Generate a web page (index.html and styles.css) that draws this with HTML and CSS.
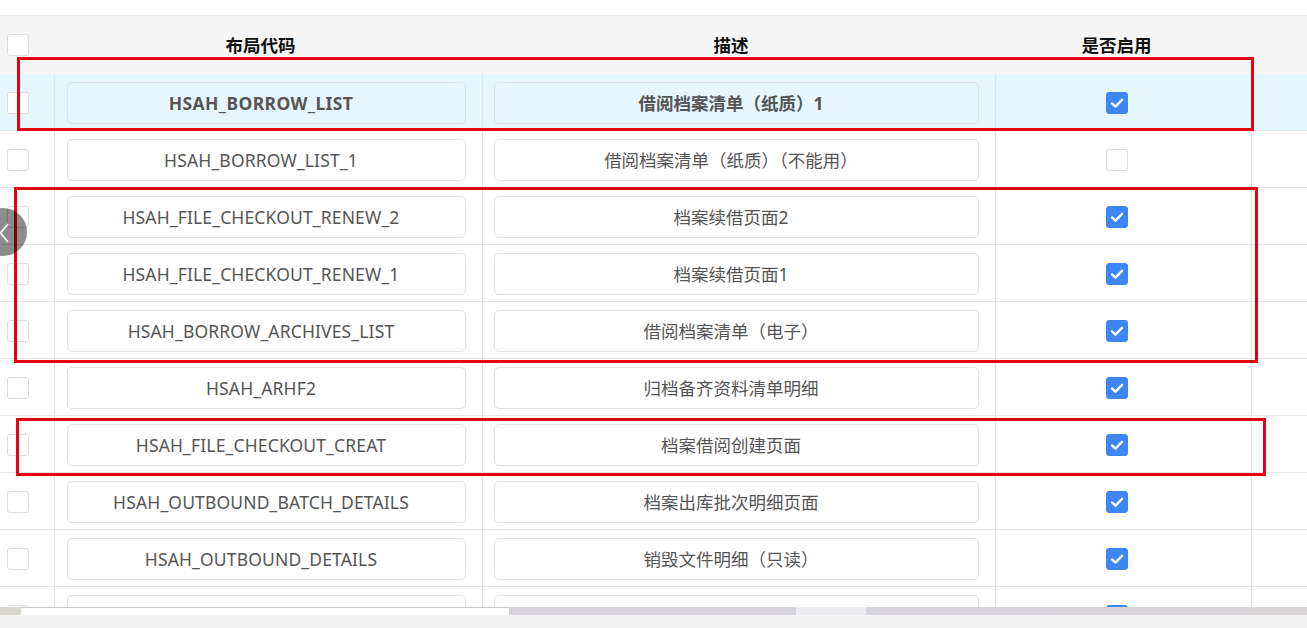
FILE: index.html
```html
<!DOCTYPE html>
<html lang="zh-CN">
<head>
<meta charset="utf-8">
<title>布局列表</title>
<link rel="stylesheet" href="styles.css">
</head>
<body>
<div class="page">
  <div class="topgap"></div>
  <div class="table">
    <div class="grid thead">
      <div class="cell c1"><span class="cb"></span></div>
      <div class="cell c2 th">布局代码</div>
      <div class="cell c3 th">描述</div>
      <div class="cell c4 th">是否启用</div>
      <div class="cell c5"></div>
    </div>

    <div class="grid tr active">
      <div class="cell c1"><span class="cb"></span></div>
      <div class="cell c2"><div class="field code">HSAH_BORROW_LIST</div></div>
      <div class="cell c3"><div class="field">借阅档案清单（纸质）1</div></div>
      <div class="cell c4"><span class="cb on"><svg viewBox="0 0 22 22"><path d="M5.5 11.5 L9.3 15 L16.5 7.5"/></svg></span></div>
      <div class="cell c5"></div>
    </div>

    <div class="grid tr">
      <div class="cell c1"><span class="cb"></span></div>
      <div class="cell c2"><div class="field code">HSAH_BORROW_LIST_1</div></div>
      <div class="cell c3"><div class="field">借阅档案清单（纸质）（不能用）</div></div>
      <div class="cell c4"><span class="cb"></span></div>
      <div class="cell c5"></div>
    </div>

    <div class="grid tr">
      <div class="cell c1"><span class="cb"></span></div>
      <div class="cell c2"><div class="field code">HSAH_FILE_CHECKOUT_RENEW_2</div></div>
      <div class="cell c3"><div class="field">档案续借页面2</div></div>
      <div class="cell c4"><span class="cb on"><svg viewBox="0 0 22 22"><path d="M5.5 11.5 L9.3 15 L16.5 7.5"/></svg></span></div>
      <div class="cell c5"></div>
    </div>

    <div class="grid tr">
      <div class="cell c1"><span class="cb"></span></div>
      <div class="cell c2"><div class="field code">HSAH_FILE_CHECKOUT_RENEW_1</div></div>
      <div class="cell c3"><div class="field">档案续借页面1</div></div>
      <div class="cell c4"><span class="cb on"><svg viewBox="0 0 22 22"><path d="M5.5 11.5 L9.3 15 L16.5 7.5"/></svg></span></div>
      <div class="cell c5"></div>
    </div>

    <div class="grid tr">
      <div class="cell c1"><span class="cb"></span></div>
      <div class="cell c2"><div class="field code">HSAH_BORROW_ARCHIVES_LIST</div></div>
      <div class="cell c3"><div class="field">借阅档案清单（电子）</div></div>
      <div class="cell c4"><span class="cb on"><svg viewBox="0 0 22 22"><path d="M5.5 11.5 L9.3 15 L16.5 7.5"/></svg></span></div>
      <div class="cell c5"></div>
    </div>

    <div class="grid tr">
      <div class="cell c1"><span class="cb"></span></div>
      <div class="cell c2"><div class="field code">HSAH_ARHF2</div></div>
      <div class="cell c3"><div class="field">归档备齐资料清单明细</div></div>
      <div class="cell c4"><span class="cb on"><svg viewBox="0 0 22 22"><path d="M5.5 11.5 L9.3 15 L16.5 7.5"/></svg></span></div>
      <div class="cell c5"></div>
    </div>

    <div class="grid tr">
      <div class="cell c1"><span class="cb"></span></div>
      <div class="cell c2"><div class="field code">HSAH_FILE_CHECKOUT_CREAT</div></div>
      <div class="cell c3"><div class="field">档案借阅创建页面</div></div>
      <div class="cell c4"><span class="cb on"><svg viewBox="0 0 22 22"><path d="M5.5 11.5 L9.3 15 L16.5 7.5"/></svg></span></div>
      <div class="cell c5"></div>
    </div>

    <div class="grid tr">
      <div class="cell c1"><span class="cb"></span></div>
      <div class="cell c2"><div class="field code">HSAH_OUTBOUND_BATCH_DETAILS</div></div>
      <div class="cell c3"><div class="field">档案出库批次明细页面</div></div>
      <div class="cell c4"><span class="cb on"><svg viewBox="0 0 22 22"><path d="M5.5 11.5 L9.3 15 L16.5 7.5"/></svg></span></div>
      <div class="cell c5"></div>
    </div>

    <div class="grid tr">
      <div class="cell c1"><span class="cb"></span></div>
      <div class="cell c2"><div class="field code">HSAH_OUTBOUND_DETAILS</div></div>
      <div class="cell c3"><div class="field">销毁文件明细（只读）</div></div>
      <div class="cell c4"><span class="cb on"><svg viewBox="0 0 22 22"><path d="M5.5 11.5 L9.3 15 L16.5 7.5"/></svg></span></div>
      <div class="cell c5"></div>
    </div>

    <div class="grid tr">
      <div class="cell c1"><span class="cb"></span></div>
      <div class="cell c2"><div class="field code"></div></div>
      <div class="cell c3"><div class="field"></div></div>
      <div class="cell c4"><span class="cb on"><svg viewBox="0 0 22 22"><path d="M5.5 11.5 L9.3 15 L16.5 7.5"/></svg></span></div>
      <div class="cell c5"></div>
    </div>
  </div>

  <div class="hscroll">
    <div class="seg seg-a"></div>
    <div class="seg seg-thumb"></div>
    <div class="seg seg-b"></div>
    <div class="seg seg-c"></div>
    <div class="seg seg-d"></div>
  </div>
  <div class="footer"></div>

  <div class="mark mark-1"></div>
  <div class="mark mark-2"></div>
  <div class="mark mark-3"></div>

  <div class="pager-btn">
    <svg viewBox="0 0 48 48"><path d="M29 16 L21.5 25 L29 34"/></svg>
  </div>
</div>
</body>
</html>
```

FILE: styles.css
```css
* { box-sizing: border-box; }

html, body {
  margin: 0;
  padding: 0;
  background: #ffffff;
}

body {
  font-family: "Noto Sans", "Noto Sans CJK SC", sans-serif;
  font-size: 17.5px;
  color: #555555;
}

.page {
  position: relative;
  width: 1307px;
  height: 628px;
  overflow: hidden;
  display: flex;
  flex-direction: column;
}

.topgap {
  height: 15px;
  flex: none;
}

.table {
  flex: 1;
  overflow: hidden;
  border-top: 1px solid #e6e6e6;
}

.grid {
  display: grid;
  grid-template-columns: 55px 428px 513px 256px 1fr;
}

.thead {
  height: 58px;
  background: #f5f5f5;
}

.tr {
  height: 57px;
  border-bottom: 1px solid #e6e6e6;
  background: #ffffff;
}

.tr.active {
  background: #e6f6fe;
  font-weight: 700;
}

.cell {
  display: flex;
  align-items: center;
  min-width: 0;
}

.tr .c1,
.tr .c2,
.tr .c3,
.tr .c4 {
  border-right: 1px solid #e3e3e3;
}

.c1 {
  padding-left: 7px;
}

.c2 {
  padding: 0 16px 0 12px;
}

.c3 {
  padding: 0 16px 0 11px;
}

.c4 {
  justify-content: center;
  padding-right: 14px;
}

.th {
  justify-content: center;
  font-weight: 700;
  color: #111111;
}

.thead .c2 { padding: 0 17px 2px 0; }
.thead .c3 { padding: 0 17px 2px 0; }
.thead .c4 { padding: 0 15px 2px 0; }

.field {
  width: 100%;
  height: 42px;
  border: 1px solid #e2e2e2;
  border-radius: 5px;
  display: flex;
  align-items: center;
  justify-content: center;
  padding: 0 11px 0 0;
  white-space: nowrap;
  margin-top: 1px;
}

.field.code {
  letter-spacing: 0.15px;
}

.active .field.code {
  letter-spacing: 0.4px;
}

.cb {
  display: inline-block;
  width: 22px;
  height: 22px;
  border: 1px solid #dcdcdc;
  border-radius: 3px;
  background: #ffffff;
  margin-top: 2px;
}

.thead .cb { margin-top: 0; }

.cb.on {
  background: #3d86f4;
  border-color: #3d86f4;
}

.cb svg {
  display: block;
  width: 20px;
  height: 20px;
}

.cb svg path {
  fill: none;
  stroke: #ffffff;
  stroke-width: 2.6;
  stroke-linecap: round;
  stroke-linejoin: round;
}

.hscroll {
  flex: none;
  height: 8px;
  display: flex;
}

.seg { height: 100%; }
.seg-a { width: 21px; background: #d9d6d2; }
.seg-thumb { width: 489px; background: #ffffff; border-top: 1px solid #c9c9c9; border-right: 1px solid #d4d4d4; }
.seg-b { width: 286px; background: #d6d3de; }
.seg-c { width: 70px; background: #ebebf0; }
.seg-d { flex: 1; background: linear-gradient(to right, #d6d3de, #d8d4d6); }

.footer {
  flex: none;
  height: 13px;
  background: #f4f4f4;
}

.mark {
  position: absolute;
  border: 3px solid #e60012;
  pointer-events: none;
}

.mark-1 { left: 17px; top: 57px; width: 1237px; height: 74px; }
.mark-2 { left: 14px; top: 187px; width: 1244px; height: 176px; }
.mark-3 { left: 16px; top: 418px; width: 1250px; height: 58px; }

.pager-btn {
  position: absolute;
  left: -21px;
  top: 208px;
  width: 48px;
  height: 48px;
  border-radius: 50%;
  background: rgba(0, 0, 0, 0.45);
}

.pager-btn svg {
  display: block;
  width: 48px;
  height: 48px;
}

.pager-btn svg path {
  fill: none;
  stroke: #ffffff;
  stroke-width: 1.6;
}
```
